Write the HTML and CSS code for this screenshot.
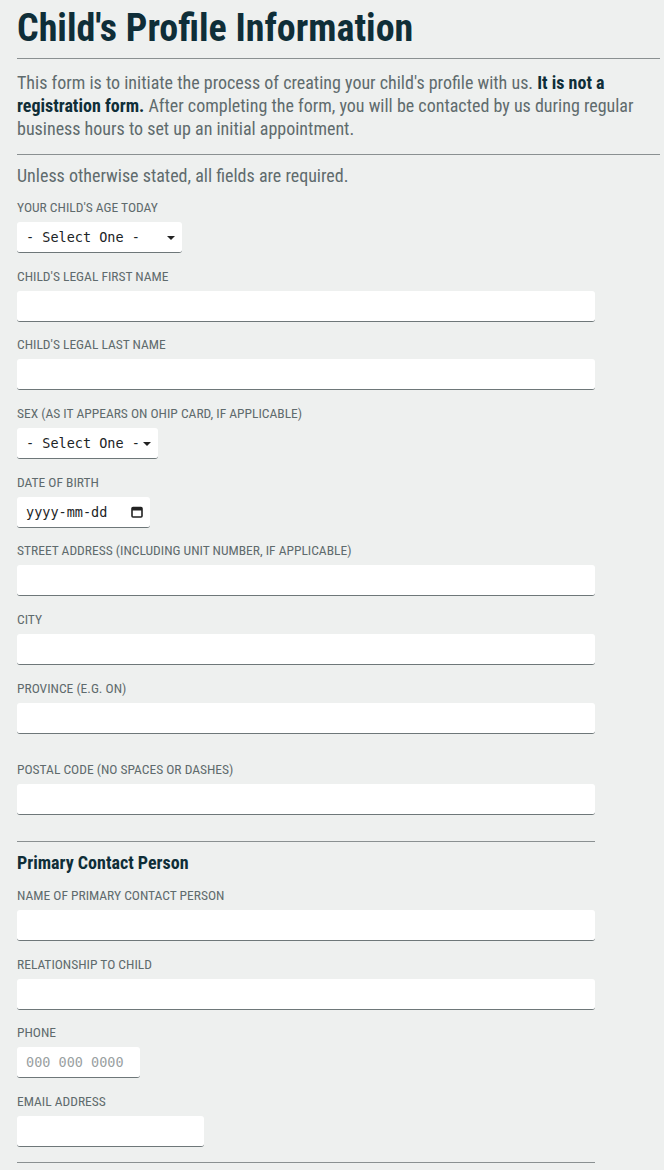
FILE: index.html
```html
<!DOCTYPE html>
<html>

<head>
    <title>Child's Profile Information</title>
    <meta charset="UTF-8">
    <link rel="stylesheet" href="styles.css">
</head>

<body>
    <form id="profile">
        <h1>Child's Profile Information</h1>
        <hr>
        <p class="intro">
            This form is to initiate the process of creating your child's profile with us.
            <strong>It is not a registration form.</strong> After completing the form, you will be
            contacted by us during regular business hours to set up an initial appointment.
        </p>
        <hr>
        <p class="note">Unless otherwise stated, all fields are required.</p>

        <div class="field">
            <label for="age">Your child's age today</label>
            <span class="select age">
                <select id="age" name="age">
                    <option>- Select One -</option>
                </select>
            </span>
        </div>
        <div class="field">
            <label for="first">Child's legal first name</label>
            <input type="text" id="first" name="first" class="wide">
        </div>
        <div class="field">
            <label for="last">Child's legal last name</label>
            <input type="text" id="last" name="last" class="wide">
        </div>
        <div class="field">
            <label for="sex">Sex (as it appears on OHIP card, if applicable)</label>
            <span class="select sex">
                <select id="sex" name="sex">
                    <option>- Select One -</option>
                </select>
            </span>
        </div>
        <div class="field">
            <label for="dob">Date of birth</label>
            <span class="date">
                <input type="text" id="dob" name="dob" value="yyyy-mm-dd">
                <svg width="12" height="12" viewBox="0 0 12 12">
                    <rect x="1" y="1.5" width="10" height="9.5" rx="1" fill="none" stroke="#222" stroke-width="1.6"/>
                    <rect x="1" y="1.5" width="10" height="3" fill="#222"/>
                </svg>
            </span>
        </div>
        <div class="field">
            <label for="street">Street address (including unit number, if applicable)</label>
            <input type="text" id="street" name="street" class="wide">
        </div>
        <div class="field">
            <label for="city">City</label>
            <input type="text" id="city" name="city" class="wide">
        </div>
        <div class="field">
            <label for="province">Province (e.g. ON)</label>
            <input type="text" id="province" name="province" class="wide">
        </div>
        <div class="field spaced">
            <label for="postal">Postal code (no spaces or dashes)</label>
            <input type="text" id="postal" name="postal" class="wide">
        </div>

        <hr class="short">
        <h2>Primary Contact Person</h2>

        <div class="field">
            <label for="contact">Name of primary contact person</label>
            <input type="text" id="contact" name="contact" class="wide">
        </div>
        <div class="field">
            <label for="relation">Relationship to child</label>
            <input type="text" id="relation" name="relation" class="wide">
        </div>
        <div class="field">
            <label for="phone">Phone</label>
            <input type="tel" id="phone" name="phone" class="phone" placeholder="000 000 0000">
        </div>
        <div class="field">
            <label for="email">Email address</label>
            <input type="email" id="email" name="email" class="email">
        </div>
        <hr class="short last">
    </form>
</body>

</html>
```

FILE: styles.css
```css
body {
    margin: 0;
    background: #eef0ef;
    font-family: "Roboto Condensed", "Liberation Sans Narrow", "DejaVu Sans Condensed", Roboto, sans-serif;
    color: #5f6b6d;
}
#profile {
    padding: 4px 4px 0 17px;
}
h1 {
    margin: 0;
    font-size: 38px;
    line-height: 48px;
    color: #0f2e38;
}
h2 {
    margin: 10px 0 14px 0;
    font-size: 18px;
    color: #0f2e38;
}
hr {
    border: 0;
    border-top: 1px solid #8a9091;
    margin: 6px 0 0 0;
}
hr.short {
    width: 578px;
    margin-top: 26px;
}
hr.short.last {
    margin-top: 0;
}
.intro {
    margin: 12px 0 14px 0;
    font-size: 18px;
    line-height: 23px;
}
.intro strong {
    color: #0f2e38;
}
.note {
    margin: 10px 0 13px 0;
    font-size: 18px;
}
.field {
    display: flex;
    flex-direction: column;
    align-items: flex-start;
    margin-bottom: 14.7px;
}
.field.spaced {
    margin-top: 27px;
}
.field label {
    text-transform: uppercase;
    font-size: 13.5px;
    line-height: 16px;
    margin-bottom: 7px;
}
input, select {
    box-sizing: border-box;
    height: 31px;
    border: 0;
    border-bottom: 1px solid #6e7779;
    border-radius: 3px;
    background: #fff;
    font-family: "DejaVu Sans Mono", "Liberation Mono", monospace;
    font-size: 13.5px;
    color: #1c2426;
    padding: 0 9px;
    outline: none;
}
input::placeholder {
    color: #9aa1a2;
}
.wide {
    width: 578px;
}
.phone {
    width: 123px;
}
.email {
    width: 187px;
}
.select {
    position: relative;
    display: inline-block;
}
.select select {
    -webkit-appearance: none;
    appearance: none;
    width: 100%;
}
.select::after {
    content: "";
    position: absolute;
    right: 7px;
    top: 14px;
    border-left: 4px solid transparent;
    border-right: 4px solid transparent;
    border-top: 4px solid #222;
    pointer-events: none;
}
.select.age {
    width: 165px;
}
.select.sex {
    width: 141px;
}
.date {
    position: relative;
    display: inline-block;
}
.date input {
    width: 133px;
}
.date svg {
    position: absolute;
    right: 7px;
    top: 9px;
}
```
